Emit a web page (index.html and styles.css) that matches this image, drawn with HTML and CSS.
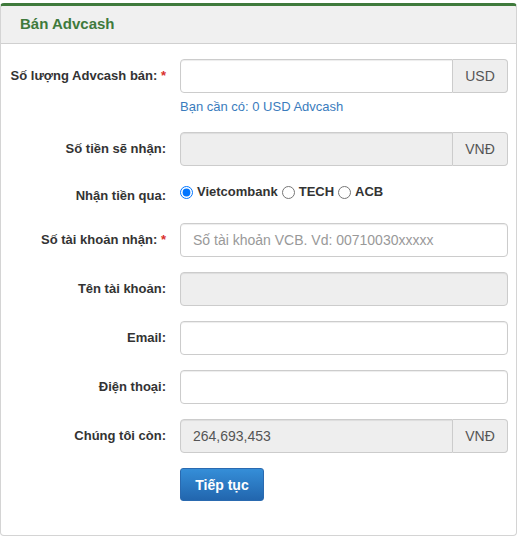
FILE: index.html
```html
<!DOCTYPE html>
<html lang="vi">
<head>
<meta charset="utf-8">
<title>Bán Advcash</title>
<link rel="stylesheet" href="styles.css">
</head>
<body>
<div class="panel">
  <div class="panel-heading">Bán Advcash</div>
  <form class="panel-body">
    <div class="row">
      <label class="label">Số lượng Advcash bán: <span class="req">*</span></label>
      <div class="ctrl">
        <div class="group">
          <input class="input" type="text">
          <span class="addon">USD</span>
        </div>
        <div class="help">Bạn cần có: 0 USD Advcash</div>
      </div>
    </div>
    <div class="row">
      <label class="label">Số tiền sẽ nhận:</label>
      <div class="ctrl">
        <div class="group">
          <input class="input" type="text" disabled>
          <span class="addon">VNĐ</span>
        </div>
      </div>
    </div>
    <div class="row">
      <label class="label label-radio">Nhận tiền qua:</label>
      <div class="ctrl radios">
        <label class="radio"><input type="radio" name="bank" checked>Vietcombank</label>
        <label class="radio"><input type="radio" name="bank">TECH</label>
        <label class="radio"><input type="radio" name="bank">ACB</label>
      </div>
    </div>
    <div class="row">
      <label class="label">Số tài khoản nhận: <span class="req">*</span></label>
      <div class="ctrl">
        <input class="input full" type="text" placeholder="Số tài khoản VCB. Vd: 00710030xxxxx">
      </div>
    </div>
    <div class="row">
      <label class="label">Tên tài khoản:</label>
      <div class="ctrl">
        <input class="input full" type="text" disabled>
      </div>
    </div>
    <div class="row">
      <label class="label">Email:</label>
      <div class="ctrl">
        <input class="input full" type="text">
      </div>
    </div>
    <div class="row">
      <label class="label">Điện thoại:</label>
      <div class="ctrl">
        <input class="input full" type="text">
      </div>
    </div>
    <div class="row">
      <label class="label">Chúng tôi còn:</label>
      <div class="ctrl">
        <div class="group">
          <input class="input" type="text" value="264,693,453" disabled>
          <span class="addon">VNĐ</span>
        </div>
      </div>
    </div>
    <div class="row">
      <div class="label"></div>
      <div class="ctrl">
        <button class="btn" type="button">Tiếp tục</button>
      </div>
    </div>
  </form>
</div>
</body>
</html>
```
FILE: styles.css
```css
* { box-sizing: border-box; }
html, body { margin: 0; padding: 0; background: #fff; }
body {
  font-family: "Liberation Sans", Arial, sans-serif;
  font-size: 13px;
  line-height: 20px;
  color: #333;
}
.panel {
  width: 517px;
  margin-top: 3px;
  height: 533px;
  border: 1px solid #d4d4d4;
  border-top: 3px solid #3f7a3c;
  border-radius: 4px;
  overflow: hidden;
}
.panel-heading {
  background: #f0f0f0;
  border-bottom: 1px solid #d0d0d0;
  color: #3f7a3c;
  font-weight: bold;
  font-size: 15px;
  line-height: 17px;
  padding: 9px 19px 11px;
}
.panel-body {
  margin: 0;
  padding: 15px 0 0;
}
.row {
  display: flex;
  margin-bottom: 15px;
}
.label {
  width: 165px;
  flex: none;
  text-align: right;
  font-weight: bold;
  padding-top: 7px;
  line-height: 20px;
  color: #333;
}
.label-radio { padding-top: 5px; }
.req { color: #d9302c; }
.ctrl {
  width: 328px;
  margin-left: 14px;
  flex: none;
}
.group {
  display: flex;
  height: 34px;
}
.input {
  height: 34px;
  border: 1px solid #ccc;
  border-radius: 4px;
  padding: 6px 12px;
  font-family: "Liberation Sans", Arial, sans-serif;
  font-size: 14px;
  color: #555;
  background: #fff;
  box-shadow: inset 0 1px 1px rgba(0,0,0,0.075);
  outline: none;
}
.input:disabled { background: #eee; color: #555; }
.input::placeholder { color: #999; }
.group .input {
  flex: 1;
  min-width: 0;
  border-radius: 4px 0 0 4px;
}
.full { width: 100%; display: block; }
.addon {
  width: 55px;
  flex: none;
  border: 1px solid #ccc;
  border-left: 0;
  border-radius: 0 4px 4px 0;
  background: #eee;
  color: #555;
  font-size: 14px;
  text-align: center;
  line-height: 32px;
}
.help {
  margin-top: 4px;
  color: #3a7cbd;
  line-height: 20px;
}
.radios {
  height: 27px;
  padding-top: 1px;
  display: flex;
  align-items: flex-start;
}
.radio {
  display: flex;
  align-items: center;
  font-weight: bold;
  line-height: 20px;
  margin-right: 4px;
}
.radio input {
  width: 13px;
  height: 13px;
  margin: 0 4px 0 0;
}
.btn {
  width: 84px;
  height: 33px;
  border: 1px solid #2a6ab0;
  border-radius: 3px;
  background: linear-gradient(#358ed8, #2266ae);
  color: #fff;
  font-family: "Liberation Sans", Arial, sans-serif;
  font-weight: bold;
  font-size: 14px;
  padding: 0;
}
```
